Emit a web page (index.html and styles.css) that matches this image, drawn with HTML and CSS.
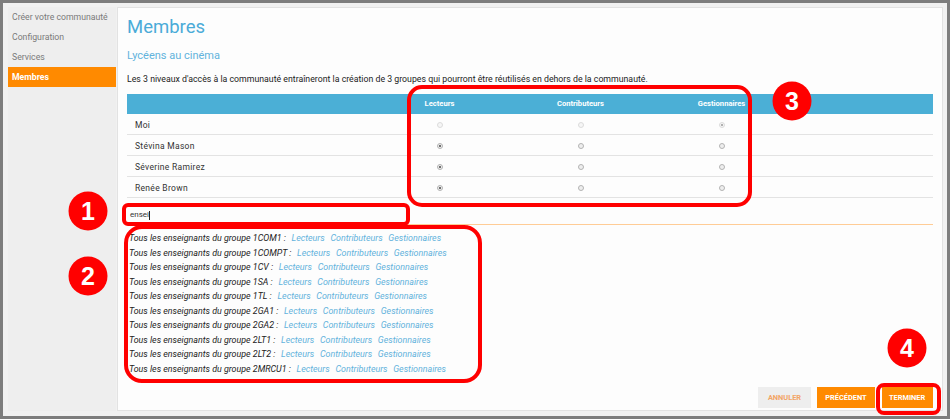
FILE: index.html
```html
<!DOCTYPE html>
<html lang="fr">
<head>
<meta charset="utf-8">
<title>Membres</title>
<link rel="stylesheet" href="styles.css">
</head>
<body>
<div class="frame">
  <nav class="sidebar">
    <div class="nav-item">Créer votre communauté</div>
    <div class="nav-item">Configuration</div>
    <div class="nav-item">Services</div>
    <div class="nav-item active">Membres</div>
  </nav>
  <main class="panel">
    <h1 class="title">Membres</h1>
    <h2 class="subtitle">Lycéens au cinéma</h2>
    <p class="desc">Les 3 niveaux d'accès à la communauté entraîneront la création de 3 groupes qui pourront être réutilisés en dehors de la communauté.</p>
    <div class="table">
      <div class="thead">
        <div class="th"></div>
        <div class="th c">Lecteurs</div>
        <div class="th c">Contributeurs</div>
        <div class="th c">Gestionnaires</div>
        <div class="th"></div>
      </div>
      <div class="tr">
        <div class="td name">Moi</div>
        <div class="td c"><span class="radio disabled"></span></div>
        <div class="td c"><span class="radio disabled"></span></div>
        <div class="td c"><span class="radio disabled checked"></span></div>
        <div class="td"></div>
      </div>
      <div class="tr">
        <div class="td name">Stévina Mason</div>
        <div class="td c"><span class="radio checked"></span></div>
        <div class="td c"><span class="radio"></span></div>
        <div class="td c"><span class="radio"></span></div>
        <div class="td"></div>
      </div>
      <div class="tr">
        <div class="td name">Séverine Ramirez</div>
        <div class="td c"><span class="radio checked"></span></div>
        <div class="td c"><span class="radio"></span></div>
        <div class="td c"><span class="radio"></span></div>
        <div class="td"></div>
      </div>
      <div class="tr">
        <div class="td name">Renée Brown</div>
        <div class="td c"><span class="radio checked"></span></div>
        <div class="td c"><span class="radio"></span></div>
        <div class="td c"><span class="radio"></span></div>
        <div class="td"></div>
      </div>
    </div>
    <div class="search">ensei<span class="caret"></span></div>
    <ul class="groups">
      <li><span class="label">Tous les enseignants du groupe 1COM1 :</span> <a>Lecteurs</a> <a>Contributeurs</a> <a>Gestionnaires</a></li>
      <li><span class="label">Tous les enseignants du groupe 1COMPT :</span> <a>Lecteurs</a> <a>Contributeurs</a> <a>Gestionnaires</a></li>
      <li><span class="label">Tous les enseignants du groupe 1CV :</span> <a>Lecteurs</a> <a>Contributeurs</a> <a>Gestionnaires</a></li>
      <li><span class="label">Tous les enseignants du groupe 1SA :</span> <a>Lecteurs</a> <a>Contributeurs</a> <a>Gestionnaires</a></li>
      <li><span class="label">Tous les enseignants du groupe 1TL :</span> <a>Lecteurs</a> <a>Contributeurs</a> <a>Gestionnaires</a></li>
      <li><span class="label">Tous les enseignants du groupe 2GA1 :</span> <a>Lecteurs</a> <a>Contributeurs</a> <a>Gestionnaires</a></li>
      <li><span class="label">Tous les enseignants du groupe 2GA2 :</span> <a>Lecteurs</a> <a>Contributeurs</a> <a>Gestionnaires</a></li>
      <li><span class="label">Tous les enseignants du groupe 2LT1 :</span> <a>Lecteurs</a> <a>Contributeurs</a> <a>Gestionnaires</a></li>
      <li><span class="label">Tous les enseignants du groupe 2LT2 :</span> <a>Lecteurs</a> <a>Contributeurs</a> <a>Gestionnaires</a></li>
      <li><span class="label">Tous les enseignants du groupe 2MRCU1 :</span> <a>Lecteurs</a> <a>Contributeurs</a> <a>Gestionnaires</a></li>
    </ul>
    <div class="actions">
      <button class="btn cancel">Annuler</button>
      <button class="btn primary">Précédent</button>
      <button class="btn primary focus">Terminer</button>
    </div>
  </main>
</div>
<svg class="annotations" width="950" height="419" viewBox="0 0 950 419">
  <g fill="none" stroke="#ff0000" stroke-width="4">
    <rect x="409" y="87" width="341" height="118" rx="13"/>
    <rect x="124" y="205" width="284" height="19" rx="4"/>
    <rect x="126" y="227" width="354" height="154" rx="16"/>
    <rect x="878" y="385" width="61" height="28" rx="6"/>
  </g>
  <g fill="#ff0000">
    <circle cx="88" cy="211" r="19.5"/>
    <circle cx="88" cy="276" r="19.5"/>
    <circle cx="792" cy="101" r="19.5"/>
    <circle cx="907" cy="348" r="19.5"/>
  </g>
  <g class="badge-text" fill="#ffffff" text-anchor="middle">
    <text x="88" y="220">1</text>
    <text x="88" y="285">2</text>
    <text x="792" y="110">3</text>
    <text x="907" y="357">4</text>
  </g>
</svg>
</body>
</html>
```

FILE: styles.css
```css
* { box-sizing: border-box; }
html, body { margin: 0; padding: 0; }
body {
  font-family: Roboto, "Liberation Sans", Arial, sans-serif;
  position: relative;
  width: 950px;
  height: 419px;
  overflow: hidden;
}
.frame {
  width: 950px;
  height: 419px;
  border: 3px solid #7d7d7d;
  background: #f1f1f1;
  padding: 4px 4px 5px 5px;
  display: flex;
}
.sidebar {
  width: 108px;
  flex: none;
  background: #eeeeee;
  display: flex;
  flex-direction: column;
}
.nav-item {
  height: 20px;
  line-height: 20px;
  font-size: 8.7px;
  color: #7a7a7a;
  padding-left: 4px;
  white-space: nowrap;
}
.nav-item.active {
  background: #ff8a00;
  color: #ffffff;
  font-weight: bold;
}
.panel {
  flex: 1;
  margin-left: 1px;
  background: #fdfdfd;
  border: 1px solid #e2e2e2;
  padding: 7px 9px 1px 9px;
  display: flex;
  flex-direction: column;
}
.title {
  margin: 0;
  font-size: 18.5px;
  line-height: 24px;
  font-weight: normal;
  color: #4aabd8;
}
.subtitle {
  margin: 10px 0 0 0;
  font-size: 11px;
  line-height: 14px;
  font-weight: normal;
  color: #62b3dc;
}
.desc {
  margin: 10px 0 0 0;
  font-size: 8.75px;
  line-height: 12px;
  color: #222;
}
.table {
  margin-top: 9px;
  width: 806px;
}
.thead, .tr {
  display: grid;
  grid-template-columns: 242px 141px 141px 141px 141px;
}
.thead {
  background: #4bafd6;
  height: 20px;
}
.th {
  color: #ffffff;
  font-weight: bold;
  font-size: 7.6px;
  line-height: 20px;
}
.c { text-align: center; }
.tr {
  height: 21px;
  border-bottom: 1px solid #e3e3e3;
}
.td {
  font-size: 8.5px;
  letter-spacing: 0.3px;
  line-height: 20px;
  color: #333;
  display: flex;
  align-items: center;
  padding-top: 1px;
}
.td.c { justify-content: center; }
.td.name { padding-left: 8px; }
.radio {
  display: inline-block;
  width: 6px;
  height: 6px;
  border-radius: 50%;
  border: 1px solid #b3b3b3;
  background: #eeeeee;
  position: relative;
}
.radio.checked::after {
  content: "";
  position: absolute;
  left: 1px;
  top: 1px;
  width: 2px;
  height: 2px;
  border-radius: 50%;
  background: #444;
}
.radio.disabled {
  border-color: #dcdcdc;
  background: #f6f6f6;
}
.radio.disabled.checked::after { background: #9a9a9a; }
.search {
  margin-top: 8px;
  height: 19px;
  border-bottom: 1px solid #ffcc96;
  font-size: 8px;
  line-height: 18px;
  color: #333;
  padding-left: 3px;
  display: flex;
  align-items: center;
}
.caret {
  display: inline-block;
  width: 1px;
  height: 9px;
  background: #222;
  margin-left: 0.5px;
}
.groups {
  list-style: none;
  margin: 6px 0 0 0;
  padding: 0 0 0 2px;
}
.groups li {
  font-size: 8.9px;
  line-height: 14.5px;
  font-style: italic;
  white-space: nowrap;
  color: #222;
}
.groups a {
  color: #62b2dc;
  margin-left: 3.5px;
}
.actions {
  margin-top: auto;
  display: flex;
  justify-content: flex-end;
  gap: 6px;
  padding-bottom: 1px;
}
.btn {
  height: 21px;
  border: none;
  font-family: Roboto, "Liberation Sans", Arial, sans-serif;
  font-size: 7.4px;
  font-weight: bold;
  text-transform: uppercase;
  padding: 0 8px;
  color: #ffffff;
}
.btn.cancel {
  background: #eeeeee;
  color: #f3a465;
  width: 53px;
}
.btn.primary { background: #ff8a00; }
.btn.primary:nth-child(2) { width: 58px; }
.btn.focus { width: 52px; box-shadow: inset 1px 0 0 #ffffff; }
.annotations {
  position: absolute;
  left: 0;
  top: 0;
  pointer-events: none;
}
.badge-text text {
  font-family: "Liberation Sans", Arial, sans-serif;
  font-weight: bold;
  font-size: 25px;
}
```
